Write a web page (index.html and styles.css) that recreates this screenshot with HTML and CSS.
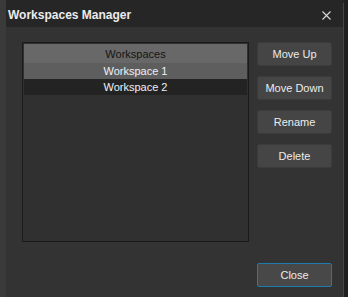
FILE: index.html
```html
<!DOCTYPE html>
<html lang="en">
<head>
  <meta charset="UTF-8">
  <title>Workspaces Manager</title>
  <link rel="stylesheet" href="styles.css">
</head>
<body>

<div class="desktop">
  <div class="edge-left"></div>

  <div class="dialog">
    <div class="titlebar">
      <span class="title">Workspaces Manager</span>
      <svg class="close-x" width="9" height="9" viewBox="0 0 9 9">
        <path d="M0.5 0.5 L8.5 8.5 M8.5 0.5 L0.5 8.5" stroke="#d8d8d8" stroke-width="1.1" fill="none"/>
      </svg>
    </div>

    <div class="body">
      <div class="main">
        <div class="list">
          <div class="list-header">Workspaces</div>
          <div class="row selected">Workspace 1</div>
          <div class="row current">Workspace 2</div>
        </div>

        <div class="actions">
          <button class="btn">Move Up</button>
          <button class="btn">Move Down</button>
          <button class="btn">Rename</button>
          <button class="btn">Delete</button>
        </div>
      </div>

      <div class="footer">
        <button class="btn focus">Close</button>
      </div>
    </div>
  </div>

  <div class="edge-right"></div>
</div>

</body>
</html>
```

FILE: styles.css
```css
body {
  margin: 0;
  background: #262626;
  font-family: 'Liberation Sans', Arial, sans-serif;
  font-size: 11px;
  color: #e8e8e8;
}

.desktop {
  display: flex;
  height: 297px;
  overflow: hidden;
}

.edge-left {
  width: 6px;
  background: #3a3a3a;
}

.edge-right {
  flex: 1;
  background: #1f1f1f;
}

.dialog {
  width: 337px;
  margin-top: 3px;
  display: flex;
  flex-direction: column;
  border-right: 1px solid #454545;
}

.titlebar {
  height: 24px;
  background: #262626;
  display: flex;
  align-items: center;
  justify-content: space-between;
  padding: 0 12px 0 2px;
}

.title {
  font-size: 12px;
  font-weight: bold;
  color: #ececec;
}

.close-x {
  display: block;
}

.body {
  flex: 1;
  background: #333333;
  padding: 15px 11px 0 16px;
}

.main {
  display: flex;
  gap: 8px;
}

.list {
  width: 225px;
  height: 198px;
  border: 1px solid #1a1a1a;
  background: #303030;
  padding: 0 1px 0 1px;
  box-sizing: content-box;
  width: 223px;
}

.list-header {
  height: 19px;
  line-height: 20px;
  margin-top: 1px;
  background: #686868;
  color: #141414;
  text-align: center;
}

.row {
  height: 16px;
  line-height: 16px;
  text-align: center;
  color: #eef0f4;
}

.row.selected {
  background: #5e5e5e;
}

.row.current {
  background: #232323;
}

.actions {
  display: flex;
  flex-direction: column;
  gap: 10px;
}

.btn {
  width: 75px;
  height: 24px;
  background: #454545;
  border: 1px solid #3b3b3b;
  border-radius: 2px;
  color: #ececec;
  font-family: 'Liberation Sans', Arial, sans-serif;
  font-size: 11px;
  padding: 0;
}

.footer {
  display: flex;
  justify-content: flex-end;
  margin-top: 21px;
}

.btn.focus {
  background: #484848;
  border-color: #1d7caa;
}
```
